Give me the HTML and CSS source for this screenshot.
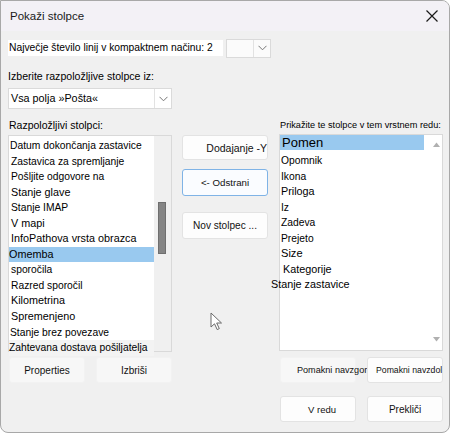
FILE: index.html
```html
<!DOCTYPE html>
<html lang="sl">
<head>
  <meta charset="UTF-8">
  <meta name="viewport" content="width=device-width, initial-scale=1.0">
  <title>Pokaži stolpce</title>
  <link rel="stylesheet" href="styles.css">
</head>
<body>
  <div class="dialog">
    <div class="titlebar">
      <span class="title">Pokaži stolpce</span>
      <svg class="close" width="14" height="14" viewBox="0 0 14 14">
        <path d="M1.5 1.5 L12.5 12.5 M12.5 1.5 L1.5 12.5" stroke="#1a1a1a" stroke-width="1.2" fill="none"/>
      </svg>
    </div>

    <div class="content">
      <div class="lines-row">
        <span class="lines-label">Največje število linij v kompaktnem načinu: 2</span>
        <div class="combo combo-small">
          <span class="combo-value"></span>
          <span class="combo-arrow">
            <svg width="9" height="6" viewBox="0 0 9 6"><path d="M0.5 0.8 L4.5 4.8 L8.5 0.8" stroke="#777" fill="none"/></svg>
          </span>
        </div>
      </div>

      <div class="field-label">Izberite razpoložljive stolpce iz:</div>
      <div class="combo combo-wide">
        <span class="combo-value">Vsa polja »Pošta«</span>
        <span class="combo-arrow">
          <svg width="9" height="6" viewBox="0 0 9 6"><path d="M0.5 0.8 L4.5 4.8 L8.5 0.8" stroke="#777" fill="none"/></svg>
        </span>
      </div>

      <div class="columns">
        <div class="col">
          <div class="list-label">Razpoložljivi stolpci:</div>
          <div class="listbox">
            <div class="items">
              <div class="item ind-2">Datum dokončanja zastavice</div>
              <div class="item">Zastavica za spremljanje</div>
              <div class="item">Pošljite odgovore na</div>
              <div class="item big">Stanje glave</div>
              <div class="item">Stanje IMAP</div>
              <div class="item big">V mapi</div>
              <div class="item big">InfoPathova vrsta obrazca</div>
              <div class="item big ind-1 selected">Omemba</div>
              <div class="item">sporočila</div>
              <div class="item">Razred sporočil</div>
              <div class="item big">Kilometrina</div>
              <div class="item big">Spremenjeno</div>
              <div class="item ind-2">Stanje brez povezave</div>
              <div class="item ind-1 shaded">Zahtevana dostava pošiljatelja</div>
            </div>
            <div class="scrollbar">
              <div class="thumb"></div>
            </div>
          </div>
        </div>

        <div class="col-mid">
          <button class="btn btn-add">Dodajanje -Y</button>
          <button class="btn btn-remove">&lt;- Odstrani</button>
          <button class="btn btn-new">Nov stolpec ...</button>
        </div>

        <div class="col">
          <div class="list-label small">Prikažite te stolpce v tem vrstnem redu:</div>
          <div class="listbox right">
            <div class="items">
              <div class="item huge selected sel-right">Pomen</div>
              <div class="item ind-3">Opomnik</div>
              <div class="item ind-3">Ikona</div>
              <div class="item big ind-3">Priloga</div>
              <div class="item ind-3">Iz</div>
              <div class="item ind-3">Zadeva</div>
              <div class="item ind-3">Prejeto</div>
              <div class="item bigger ind-3">Size</div>
              <div class="item big ind-4">Kategorije</div>
              <div class="item big outdent">Stanje zastavice</div>
            </div>
            <div class="scrollbar arrows">
              <svg width="7" height="5" viewBox="0 0 7 5"><path d="M0 5 L3.5 0.5 L7 5 Z" fill="#b0b0b0"/></svg>
              <svg width="7" height="5" viewBox="0 0 7 5"><path d="M0 0 L3.5 4.5 L7 0 Z" fill="#b0b0b0"/></svg>
            </div>
          </div>
        </div>
      </div>

      <div class="action-row">
        <div class="pair">
          <button class="btn flat">Properties</button>
          <button class="btn flat">Izbriši</button>
        </div>
        <div class="pair">
          <button class="btn flat move-up">Pomakni navzgor</button>
          <button class="btn move-down">Pomakni navzdol</button>
        </div>
      </div>

      <div class="footer-row">
        <button class="btn ok">V redu</button>
        <button class="btn">Prekliči</button>
      </div>
    </div>

    <svg class="cursor" width="14" height="20" viewBox="0 0 14 20">
      <path d="M1 1 L1 15 L4.5 11.8 L7.2 17.6 L9.3 16.6 L6.7 11 L11.5 11 Z" fill="#fff" stroke="#6a6a6a" stroke-width="1" stroke-linejoin="round"/>
    </svg>
  </div>
</body>
</html>
```

FILE: styles.css
```css
/* Dialog frame */
body {
  margin: 0;
  background: #ffffff;
  font-family: "Liberation Sans", Arial, sans-serif;
  color: #000;
}

.dialog {
  position: relative;
  width: 448px;
  height: 431px;
  border: 1px solid #a8a8a8;
  border-radius: 0 8px 8px 8px;
  background: #f0f0f0;
  overflow: hidden;
}

.titlebar {
  height: 30px;
  background: #f3f1f6;
  display: flex;
  align-items: center;
  justify-content: space-between;
  padding: 0 10px 0 9px;
}

.title {
  font-size: 11.5px;
  color: #1a1a1a;
}

.content {
  padding: 8px 6px 0 7px;
  font-size: 10.5px;
}

/* Top rows */
.lines-row {
  display: flex;
  align-items: center;
  height: 18px;
}

.lines-label {
  background: #fff;
  width: 214px;
  line-height: 16px;
  padding-left: 1px;
  font-size: 10.3px;
  white-space: nowrap;
}

.combo {
  display: flex;
  background: #fff;
  border: 1px solid #dadada;
  box-sizing: border-box;
}

.combo-small {
  width: 45px;
  height: 19px;
  margin-left: 3px;
  background: #fbfbfb;
}

.combo-wide {
  width: 164px;
  height: 21px;
}

.combo-value {
  flex: 1;
  padding-left: 2px;
  line-height: 19px;
  font-size: 10.8px;
  white-space: nowrap;
}

.combo-arrow {
  width: 16px;
  border-left: 1px solid #e2e2e2;
  display: flex;
  align-items: center;
  justify-content: center;
}

.field-label {
  margin-top: 11px;
  height: 20px;
  line-height: 16px;
  font-size: 10.6px;
}

/* Lists */
.columns {
  display: flex;
  margin-top: 8px;
}

.col {
  width: 164px;
}

.list-label {
  height: 18px;
  line-height: 16px;
  font-size: 10.5px;
  padding-left: 1px;
  white-space: nowrap;
}

.list-label.small {
  font-size: 9.2px;
  height: 17px;
}

.listbox {
  position: relative;
  height: 217px;
  border: 1px solid #d9d9d9;
  box-sizing: border-box;
  background: #fff;
  display: flex;
}

.items {
  flex: 1;
  min-width: 0;
  padding-top: 2px;
}

.item {
  height: 15.55px;
  line-height: 15.55px;
  padding-left: 2px;
  white-space: nowrap;
  font-size: 10.3px;
}

.big { font-size: 10.8px; }
.bigger { font-size: 11.1px; }
.huge { font-size: 13px; }
.ind-1 { padding-left: 0; }
.ind-2 { padding-left: 1px; }
.ind-3 { padding-left: 1px; }
.ind-4 { padding-left: 3px; }
.outdent { margin-left: -11px; }

.selected {
  background: #99c9ef;
}

.shaded {
  background: #f3f3f3;
}

.right .items {
  padding-top: 0;
}

.right .item {
  height: 15.5px;
  line-height: 15.5px;
}

.right .sel-right {
  height: 15px;
  line-height: 15px;
  margin-right: 7px;
  margin-bottom: 3px;
}

.scrollbar {
  width: 17px;
  flex-shrink: 0;
  background: #f0f0f0;
  position: relative;
}

.thumb {
  position: absolute;
  left: 4px;
  top: 66px;
  width: 8px;
  height: 52px;
  background: #858585;
  border: 1px solid #6f6f6f;
  box-sizing: border-box;
}

.scrollbar.arrows {
  width: 11px;
  background: #fff;
  display: flex;
  flex-direction: column;
  justify-content: space-between;
  align-items: center;
  padding: 7px 0 8px;
}

/* Middle buttons */
.col-mid {
  width: 86px;
  margin: 18px 11px 0 10px;
  display: flex;
  flex-direction: column;
}

.btn {
  font-family: "Liberation Sans", Arial, sans-serif;
  font-size: 10px;
  color: #111;
  background: #fdfdfd;
  border: 1px solid #e3e3e3;
  border-radius: 3px;
  width: 76px;
  height: 26px;
  padding: 0;
  white-space: nowrap;
}

.col-mid .btn {
  width: 86px;
}

.btn-add {
  height: 25px;
  font-size: 10.5px;
  text-align: right;
  padding-right: 0;
}

.btn-remove {
  height: 27px;
  margin-top: 9px;
  font-size: 9.7px;
  border-color: #7fb3e6;
  background: #fafcff;
}

.btn-new {
  height: 27px;
  margin-top: 16px;
  font-size: 10.1px;
}

/* Bottom rows */
.action-row {
  display: flex;
  justify-content: space-between;
  margin-top: 5px;
  padding-left: 1px;
}

.pair {
  display: flex;
  gap: 11px;
}

.btn.flat {
  background: #f7f7f7;
  border-color: #f2f2f2;
}

.btn.move-up {
  font-size: 9.1px;
  text-align: left;
  padding-left: 16px;
  overflow: visible;
}

.btn.move-down {
  font-size: 8.7px;
  text-align: left;
  padding-left: 8px;
}

.footer-row {
  display: flex;
  justify-content: flex-end;
  gap: 11px;
  margin-top: 13px;
}

.btn.ok {
  font-size: 9.5px;
  padding-left: 8px;
}

.cursor {
  position: absolute;
  left: 209px;
  top: 311px;
}
```
